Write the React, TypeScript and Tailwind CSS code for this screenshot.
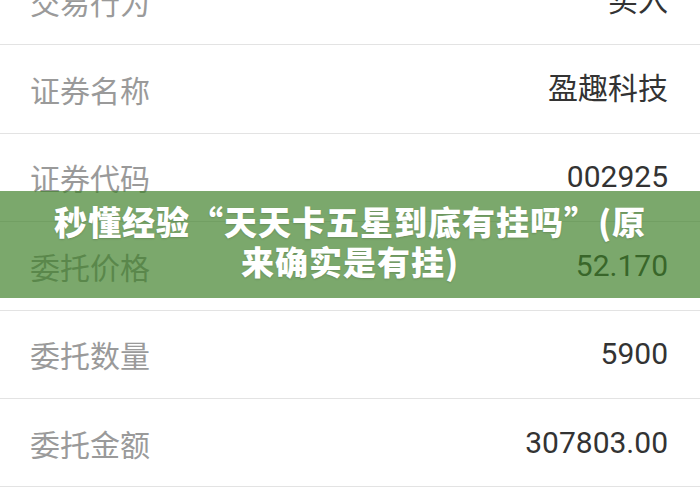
import React from 'react';

interface Row {
  label: string;
  value: string;
}

const rows: Row[] = [
  { label: '交易行为', value: '买入' },
  { label: '证券名称', value: '盈趣科技' },
  { label: '证券代码', value: '002925' },
  { label: '委托价格', value: '52.170' },
  { label: '委托数量', value: '5900' },
  { label: '委托金额', value: '307803.00' },
];

const DetailRow: React.FC<{ row: Row }> = ({ row }) => (
  <div className="flex items-center justify-between h-[88.4px] border-b border-[#e3e3e3] pl-[30px] pr-[32px]">
    <span className="text-[30px] leading-none text-[#9a9a9a] font-['Noto_Sans_CJK_SC',sans-serif]">
      {row.label}
    </span>
    <span className="text-[30px] leading-none text-[#333333] font-['Roboto','Noto_Sans_CJK_SC',sans-serif]">
      {row.value}
    </span>
  </div>
);

export default function App() {
  return (
    <div className="relative w-[700px] h-[490px] overflow-hidden bg-white">
      {/* Order detail list, first row partly scrolled off */}
      <div className="-mt-[43px] flex flex-col">
        {rows.map((r) => (
          <DetailRow key={r.label} row={r} />
        ))}
      </div>

      {/* Title banner over the list */}
      <div className="absolute left-0 right-0 top-[191px] h-[107px] bg-[rgba(61,127,39,0.68)] flex items-center justify-center px-[50px] pb-[8px]">
        <h1 className="text-center text-white text-[33px] leading-[40px] tracking-[1px] font-black font-['Noto_Sans_CJK_SC',sans-serif] [text-shadow:0_1px_2px_rgba(0,0,0,0.15)]">
          秒懂经验“天天卡五星到底有挂吗”(原来确实是有挂)
        </h1>
      </div>
    </div>
  );
}
